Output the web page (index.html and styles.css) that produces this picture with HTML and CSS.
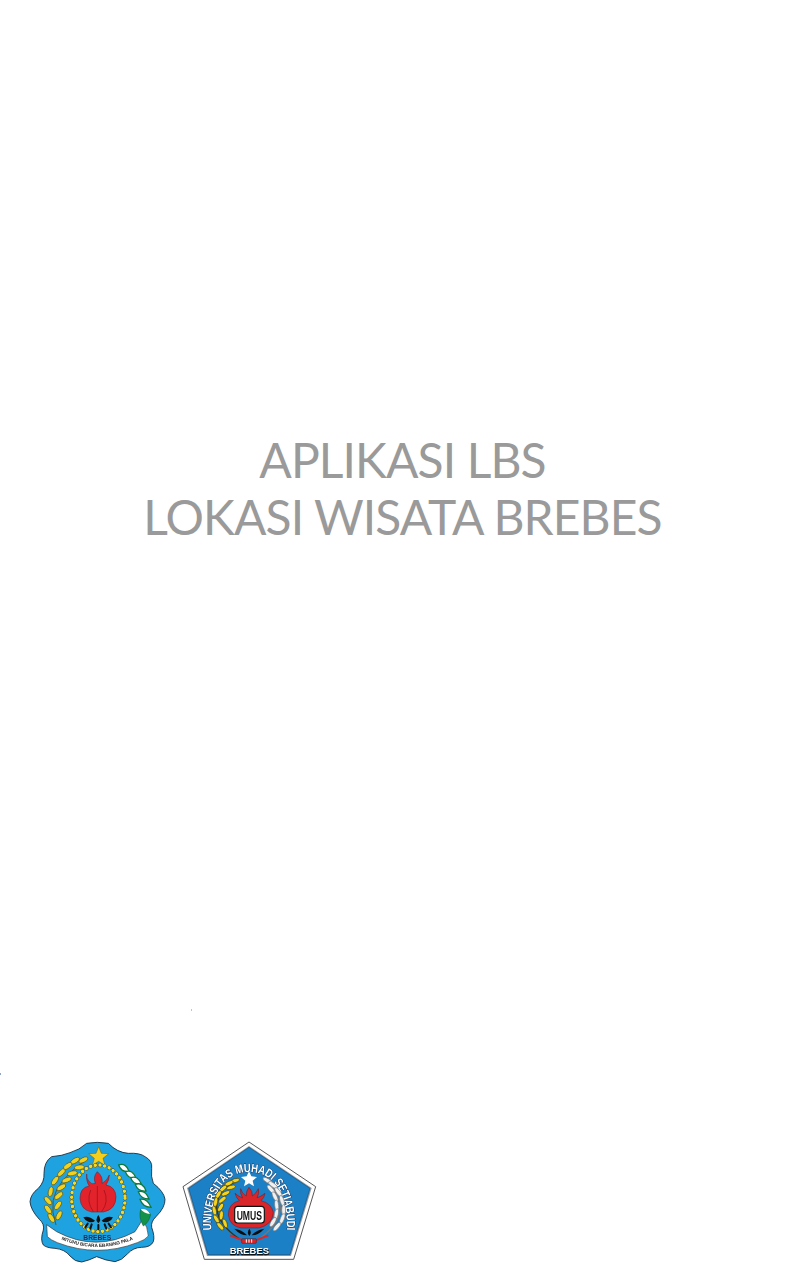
FILE: index.html
```html
<!DOCTYPE html>
<html lang="id">
<head>
<meta charset="utf-8">
<title>Aplikasi LBS Lokasi Wisata Brebes</title>
<link rel="stylesheet" href="styles.css">
</head>
<body>
<main class="splash">
  <h1 class="title">APLIKASI LBS<br>LOKASI WISATA BREBES</h1>
  <span class="speck speck-a"></span>
  <span class="speck speck-b"></span>
  <div class="logos">
    <svg class="logo logo-brebes" viewBox="0 0 465 420" role="img" aria-label="Lambang Kabupaten Brebes">
      <path class="b-shield" d="M200 40 Q232 34 265 40 Q292 68 325 70 Q360 68 375 80 Q398 92 395 115 Q392 140 400 160 Q432 185 435 208 Q436 232 408 260 Q392 275 395 292 Q405 320 400 335 Q392 352 365 352 Q340 352 322 372 Q305 392 285 395 Q258 392 230 380 Q205 392 185 396 Q165 396 150 378 Q135 358 105 355 Q80 354 70 345 Q60 330 70 300 Q74 282 58 268 Q32 240 30 215 Q32 192 55 175 Q74 155 72 130 Q72 95 95 80 Q125 78 150 68 Q178 60 200 40Z"/>
      <path class="b-star" d="M236 50l8 20 22 1-17 14 6 21-19-12-19 12 6-21-17-14 22-1z"/>
      <path class="b-ribbon" d="M80 284 L110 305 Q228 368 345 305 L368 268 Q384 292 385 318 Q376 330 352 338 Q232 384 112 338 Q92 330 82 320Z"/>
      <path id="mottoArc" class="b-none" d="M118 326 Q232 376 345 326"/>
      <text class="b-motto"><textPath href="#mottoArc" startOffset="50%">MITUHU BICARA EBANING PALA</textPath></text>
      <path class="b-stem" d="M108 285 Q80 205 130 150 Q160 115 200 88"/>
      <g class="b-grain">
        <ellipse cx="190" cy="90" rx="15" ry="7" transform="rotate(-25 190 90)"/>
        <ellipse cx="165" cy="92" rx="15" ry="7" transform="rotate(-30 165 92)"/>
        <ellipse cx="178" cy="112" rx="15" ry="7" transform="rotate(-5 178 112)"/>
        <ellipse cx="143" cy="108" rx="15" ry="7" transform="rotate(-35 143 108)"/>
        <ellipse cx="157" cy="130" rx="15" ry="7" transform="rotate(-10 157 130)"/>
        <ellipse cx="124" cy="128" rx="15" ry="7" transform="rotate(-45 124 128)"/>
        <ellipse cx="140" cy="150" rx="15" ry="7" transform="rotate(-20 140 150)"/>
        <ellipse cx="105" cy="152" rx="15" ry="7" transform="rotate(-55 105 152)"/>
        <ellipse cx="124" cy="172" rx="15" ry="7" transform="rotate(-30 124 172)"/>
        <ellipse cx="92" cy="185" rx="15" ry="7" transform="rotate(-80 92 185)"/>
        <ellipse cx="116" cy="197" rx="15" ry="7" transform="rotate(-40 116 197)"/>
        <ellipse cx="84" cy="212" rx="15" ry="7" transform="rotate(50 84 212)"/>
        <ellipse cx="114" cy="226" rx="15" ry="7" transform="rotate(-55 114 226)"/>
        <ellipse cx="84" cy="238" rx="15" ry="7" transform="rotate(55 84 238)"/>
        <ellipse cx="117" cy="256" rx="15" ry="7" transform="rotate(-65 117 256)"/>
        <ellipse cx="94" cy="264" rx="15" ry="7" transform="rotate(60 94 264)"/>
      </g>
      <g class="b-leaf">
        <path d="M296 105q22-8 32 20q-25 2-32-20z"/>
        <path d="M316 125q22-8 32 20q-25 2-32-20z"/>
        <path d="M332 143q22-8 32 20q-25 2-32-20z"/>
        <path d="M346 163q22-8 32 20q-25 2-32-20z"/>
        <path d="M355 185q22-6 32 22q-25 0-32-22z"/>
        <path d="M360 208q22-4 33 24q-25 0-33-24z"/>
      </g>
      <path class="b-leaf-end" d="M362 238q24 2 30 16q-6 24-22 34q-15-25-8-50z"/>
      <path class="b-leaf-white" d="M362 238q18-4 28 14q-18-2-28-14z"/>
      <ellipse class="b-ring-fill" cx="235" cy="205" rx="80" ry="100"/>
      <ellipse class="b-ring-dark" cx="235" cy="205" rx="80" ry="100"/>
      <ellipse class="b-ring-dots" cx="235" cy="205" rx="80" ry="100"/>
      <path class="b-onion" d="M232 125 Q218 140 226 160 Q215 165 208 155 Q198 145 200 132 Q198 155 208 168 Q180 172 180 205 Q182 240 215 246 L250 246 Q288 238 288 200 Q286 170 258 165 Q268 150 268 135 Q262 152 246 160 Q250 140 232 125Z"/>
      <path class="b-onion-line" d="M232 168V246M212 180Q198 215 220 245M252 180Q268 215 245 245"/>
      <path class="b-flame" d="M190 262 Q205 255 225 272 Q218 280 205 275 Q195 272 190 262Z M279 262 Q262 255 245 272 Q252 280 265 275 Q275 272 279 262Z M235 255 Q246 270 235 280 Q224 270 235 255Z"/>
      <path class="b-flame-lines" d="M203 281L196 292M215 283L211 296M235 285V297M254 283L259 296M266 281L273 292"/>
      <text class="b-name" x="232" y="331" textLength="84" lengthAdjust="spacingAndGlyphs">BREBES</text>
    </svg>
    <svg class="logo logo-umus" viewBox="0 0 450 420" role="img" aria-label="Logo Universitas Muhadi Setiabudi Brebes">
      <path class="u-outer" d="M222 36 L422 170 L356 388 L88 388 L24 170Z"/>
      <path class="u-mid" d="M222 48 L410 174 L348 378 L96 378 L36 174Z"/>
      <path class="u-inner" d="M222 52 L405 175 L345 374 L99 374 L41 175Z"/>
      <path id="umusArc" class="b-none" d="M110 322 C100 215 135 126 222 126 C309 126 344 215 334 322"/>
      <text class="u-arc"><textPath href="#umusArc" startOffset="50%" textLength="470" lengthAdjust="spacingAndGlyphs">UNIVERSITAS MUHADI SETIABUDI</textPath></text>
      <path class="u-star" d="M222 124l7 15 17 2-13 11 4 17-15-9-15 9 4-17-13-11 17-2z"/>
      <path class="u-stem" d="M192 150Q130 175 125 225Q123 280 195 328"/>
      <g class="u-wheat">
        <ellipse cx="180" cy="152" rx="14" ry="6" transform="rotate(-15 180 152)"/>
        <ellipse cx="162" cy="160" rx="14" ry="6" transform="rotate(-25 162 160)"/>
        <ellipse cx="168" cy="172" rx="14" ry="6" transform="rotate(-15 168 172)"/>
        <ellipse cx="144" cy="176" rx="14" ry="6" transform="rotate(-40 144 176)"/>
        <ellipse cx="152" cy="190" rx="14" ry="6" transform="rotate(-25 152 190)"/>
        <ellipse cx="130" cy="194" rx="14" ry="6" transform="rotate(-60 130 194)"/>
        <ellipse cx="142" cy="209" rx="14" ry="6" transform="rotate(-40 142 209)"/>
        <ellipse cx="122" cy="216" rx="14" ry="6" transform="rotate(-80 122 216)"/>
        <ellipse cx="137" cy="232" rx="14" ry="6" transform="rotate(-60 137 232)"/>
        <ellipse cx="118" cy="242" rx="14" ry="6" transform="rotate(80 118 242)"/>
        <ellipse cx="139" cy="256" rx="14" ry="6" transform="rotate(-85 139 256)"/>
        <ellipse cx="124" cy="267" rx="14" ry="6" transform="rotate(60 124 267)"/>
        <ellipse cx="150" cy="280" rx="14" ry="6" transform="rotate(70 150 280)"/>
        <ellipse cx="136" cy="289" rx="14" ry="6" transform="rotate(50 136 289)"/>
      </g>
      <path class="u-stem-grey" d="M264 142Q312 180 316 235Q314 285 250 328"/>
      <g class="u-laurel">
        <ellipse cx="278" cy="152" rx="16" ry="6" transform="rotate(30 278 152)"/>
        <ellipse cx="294" cy="165" rx="16" ry="6" transform="rotate(35 294 165)"/>
        <ellipse cx="288" cy="178" rx="16" ry="6" transform="rotate(50 288 178)"/>
        <ellipse cx="310" cy="186" rx="16" ry="6" transform="rotate(55 310 186)"/>
        <ellipse cx="300" cy="200" rx="16" ry="6" transform="rotate(65 300 200)"/>
        <ellipse cx="321" cy="212" rx="16" ry="6" transform="rotate(75 321 212)"/>
        <ellipse cx="305" cy="226" rx="16" ry="6" transform="rotate(85 305 226)"/>
        <ellipse cx="326" cy="240" rx="16" ry="6" transform="rotate(90 326 240)"/>
        <ellipse cx="304" cy="252" rx="16" ry="6" transform="rotate(100 304 252)"/>
        <ellipse cx="322" cy="266" rx="16" ry="6" transform="rotate(110 322 266)"/>
        <ellipse cx="294" cy="276" rx="16" ry="6" transform="rotate(120 294 276)"/>
        <ellipse cx="306" cy="290" rx="16" ry="6" transform="rotate(130 306 290)"/>
      </g>
      <path class="u-onion" d="M222 172 Q212 185 214 198 Q200 190 197 176 Q194 190 203 204 Q188 198 180 190 Q184 205 193 212 Q160 220 160 255 Q164 288 198 294 L252 294 Q292 284 295 248 Q290 220 258 212 Q268 204 270 190 Q258 200 246 203 Q254 190 250 176 Q244 190 232 198 Q234 185 222 172Z"/>
      <rect class="u-box" x="179" y="229" width="89" height="50" rx="9"/>
      <text class="u-umus" x="223" y="269" textLength="76" lengthAdjust="spacingAndGlyphs">UMUS</text>
      <path class="u-flame" d="M178 296 Q200 298 216 316 Q196 316 178 296Z M268 296 Q246 298 230 316 Q250 316 268 296Z M223 296 Q232 308 223 318 Q214 308 223 296Z"/>
      <path class="u-bar" d="M165 316 Q190 326 205 332 M280 316 Q255 326 240 332"/>
      <rect class="u-bar-red" x="200" y="326" width="44" height="14" rx="2"/>
      <path class="u-bar-lines" d="M214 328V338M222 328V338M230 328V338"/>
      <text class="u-brebes-shadow" x="224" y="374" textLength="118" lengthAdjust="spacingAndGlyphs">BREBES</text>
      <text class="u-brebes" x="223" y="373" textLength="118" lengthAdjust="spacingAndGlyphs">BREBES</text>
    </svg>
  </div>
</main>
</body>
</html>
```

FILE: styles.css
```css
html, body {
  margin: 0;
  background: #fff;
}
.splash {
  position: relative;
  height: 1286px;
  width: 805px;
  overflow: hidden;
  display: flex;
  flex-direction: column;
}
.title {
  margin: 431px 0 0;
  font: 400 48px/57px "Lato", "Open Sans", sans-serif;
  letter-spacing: -0.9px;
  color: #9a9a9a;
  text-align: center;
}
.speck {
  position: absolute;
  width: 1px;
  height: 2px;
}
.speck-a { left: 191px; top: 1009px; background: #c4c4c4; }
.speck-b { left: 0; top: 1073px; background: #8fa6c8; }
.logos {
  margin-top: auto;
  display: flex;
  padding: 0 0 16px 20px;
}
.logo { display: block; height: 140px; filter: blur(0.35px); }
.logo-brebes { width: 155px; }
.logo-umus { width: 150px; }

.b-none { fill: none; }
.b-shield { fill: #1fa3e0; stroke: #123; stroke-width: 2.5; }
.b-star { fill: #f5cf1e; stroke: #6b5a10; stroke-width: 1.5; }
.b-ribbon { fill: #fff; stroke: #333; stroke-width: 2; }
.b-motto {
  font: 700 14px "Liberation Sans", sans-serif;
  fill: #222;
  text-anchor: middle;
}
.b-stem { fill: none; stroke: #5a5a20; stroke-width: 3; }
.b-grain ellipse { fill: #f2d21e; stroke: #4f4a18; stroke-width: 1.8; }
.b-leaf path { fill: #fff; stroke: #0d7a3c; stroke-width: 4; }
.b-leaf-end { fill: #15924a; stroke: #0b5a2e; stroke-width: 1.5; }
.b-leaf-white { fill: #fff; }
.b-ring-fill { fill: #22a6e2; }
.b-ring-dark { fill: none; stroke: #333; stroke-width: 12.5; stroke-dasharray: 0.1 14.2; stroke-linecap: round; }
.b-ring-dots { fill: none; stroke: #f6da22; stroke-width: 10.5; stroke-dasharray: 0.1 14.2; stroke-linecap: round; }
.b-onion { fill: #e2232c; stroke: #7a1016; stroke-width: 1.5; }
.b-onion-line { fill: none; stroke: #8f1118; stroke-width: 2; }
.b-flame { fill: #111; }
.b-flame-lines { stroke: #111; stroke-width: 6; stroke-linecap: round; fill: none; }
.b-name {
  font: 700 19px "Liberation Sans", sans-serif;
  fill: #20305a;
  text-anchor: middle;
}

.u-outer { fill: #fff; stroke: #333; stroke-width: 2.5; stroke-linejoin: round; }
.u-mid { fill: #9a9a9a; }
.u-inner { fill: #1b80c6; stroke: #0c4f86; stroke-width: 2; }
.u-arc {
  font: 700 36px "Liberation Sans", sans-serif;
  fill: #fff;
  stroke: #14254a;
  stroke-width: 2.5;
  paint-order: stroke;
  text-anchor: middle;
}
.u-star { fill: #fff; }
.u-stem { fill: none; stroke: #3b3510; stroke-width: 4; }
.u-stem-grey { fill: none; stroke: #777; stroke-width: 4; }
.u-wheat ellipse { fill: #f5d420; stroke: #3b3510; stroke-width: 1.8; }
.u-laurel ellipse { fill: #f0f0f0; stroke: #777; stroke-width: 1.8; }
.u-onion { fill: #d8262b; stroke: #7a1216; stroke-width: 1.5; }
.u-box { fill: #fff; stroke: #111; stroke-width: 3.5; }
.u-umus {
  font: 700 36px "Liberation Sans", sans-serif;
  fill: #111;
  text-anchor: middle;
}
.u-flame { fill: #0d0d0d; }
.u-bar { fill: none; stroke: #d8262b; stroke-width: 6; }
.u-bar-red { fill: #d8262b; stroke: #111; stroke-width: 1; }
.u-bar-lines { fill: none; stroke: #fff; stroke-width: 3; }
.u-brebes, .u-brebes-shadow {
  font: 700 26px "Liberation Sans", sans-serif;
  text-anchor: middle;
}
.u-brebes { fill: #fff; }
.u-brebes-shadow { fill: #111; stroke: #111; stroke-width: 2; }
```
